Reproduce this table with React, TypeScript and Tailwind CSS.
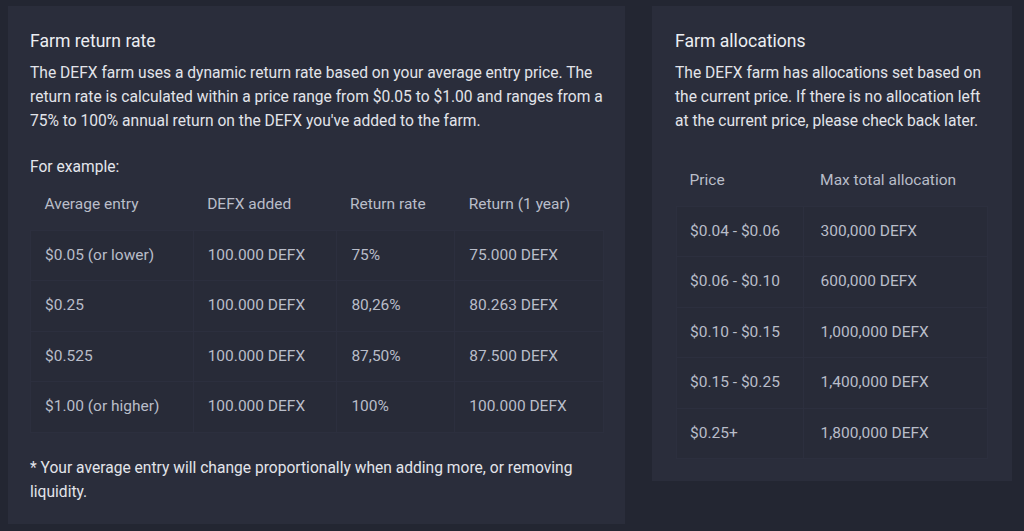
const returnRows = [
  ['$0.05 (or lower)', '100.000 DEFX', '75%', '75.000 DEFX'],
  ['$0.25', '100.000 DEFX', '80,26%', '80.263 DEFX'],
  ['$0.525', '100.000 DEFX', '87,50%', '87.500 DEFX'],
  ['$1.00 (or higher)', '100.000 DEFX', '100%', '100.000 DEFX'],
]

const allocationRows = [
  ['$0.04 - $0.06', '300,000 DEFX'],
  ['$0.06 - $0.10', '600,000 DEFX'],
  ['$0.10 - $0.15', '1,000,000 DEFX'],
  ['$0.15 - $0.25', '1,400,000 DEFX'],
  ['$0.25+', '1,800,000 DEFX'],
]

function App() {
  return (
    <div className="flex h-[531px] w-[1024px] items-start gap-[27px] bg-[#232632] px-2 pt-[6px] font-['Roboto',sans-serif] text-[15.6px] text-[#e4e6ec]">
      <section className="h-[518px] w-[617px] bg-[#2a2d3b] px-[22px] pt-[23px]">
        <h2 className="text-[17.6px] leading-6 text-[#eceef2]">Farm return rate</h2>
        <p className="mt-[8px] leading-[24px] text-[#e2e4ea]">
          The DEFX farm uses a dynamic return rate based on your average entry price. The return rate is calculated
          within a price range from $0.05 to $1.00 and ranges from a 75% to 100% annual return on the DEFX you've
          added to the farm.
        </p>
        <p className="mt-[22px] leading-6">For example:</p>
        <table className="mt-[1px] w-[574px] border-collapse text-[15.5px] text-[#b9bdc9]">
          <colgroup>
            <col className="w-[163px]" />
            <col className="w-[144px]" />
            <col className="w-[118px]" />
            <col className="w-[149px]" />
          </colgroup>
          <thead>
            <tr className="h-[50px]">
              <th className="px-[14px] text-left font-normal">Average entry</th>
              <th className="px-[14px] text-left font-normal">DEFX added</th>
              <th className="px-[13px] text-left font-normal">Return rate</th>
              <th className="px-[14px] text-left font-normal">Return (1 year)</th>
            </tr>
          </thead>
          <tbody>
            {returnRows.map((row) => (
              <tr key={row[0]} className="h-[50.5px] bg-[#282b38]">
                {row.map((cell, i) => (
                  <td key={i} className="border border-[#2c2f3e] px-[14px]">
                    {cell}
                  </td>
                ))}
              </tr>
            ))}
          </tbody>
        </table>
        <p className="mt-[23px] leading-6 text-[#e2e4ea]">
          * Your average entry will change proportionally when adding more, or removing liquidity.
        </p>
      </section>
      <section className="h-[475px] w-[360px] bg-[#2a2d3b] px-[23px] pt-[23px]">
        <h2 className="text-[17.6px] leading-6 text-[#eceef2]">Farm allocations</h2>
        <p className="mt-[8px] leading-[24px] text-[#e2e4ea]">
          The DEFX farm has allocations set based on the current price. If there is no allocation left at the
          current price, please check back later.
        </p>
        <table className="mt-[23px] ml-px w-[312px] border-collapse text-[15.5px] text-[#b9bdc9]">
          <colgroup>
            <col className="w-[127px]" />
            <col className="w-[185px]" />
          </colgroup>
          <thead>
            <tr className="h-[50px]">
              <th className="px-[13px] text-left font-normal">Price</th>
              <th className="px-[17px] text-left font-normal">Max total allocation</th>
            </tr>
          </thead>
          <tbody>
            {allocationRows.map((row) => (
              <tr key={row[0]} className="h-[50.5px] bg-[#282b38]">
                <td className="border border-[#2c2f3e] px-[13px]">{row[0]}</td>
                <td className="border border-[#2c2f3e] px-[17px]">{row[1]}</td>
              </tr>
            ))}
          </tbody>
        </table>
      </section>
    </div>
  )
}

export default App
